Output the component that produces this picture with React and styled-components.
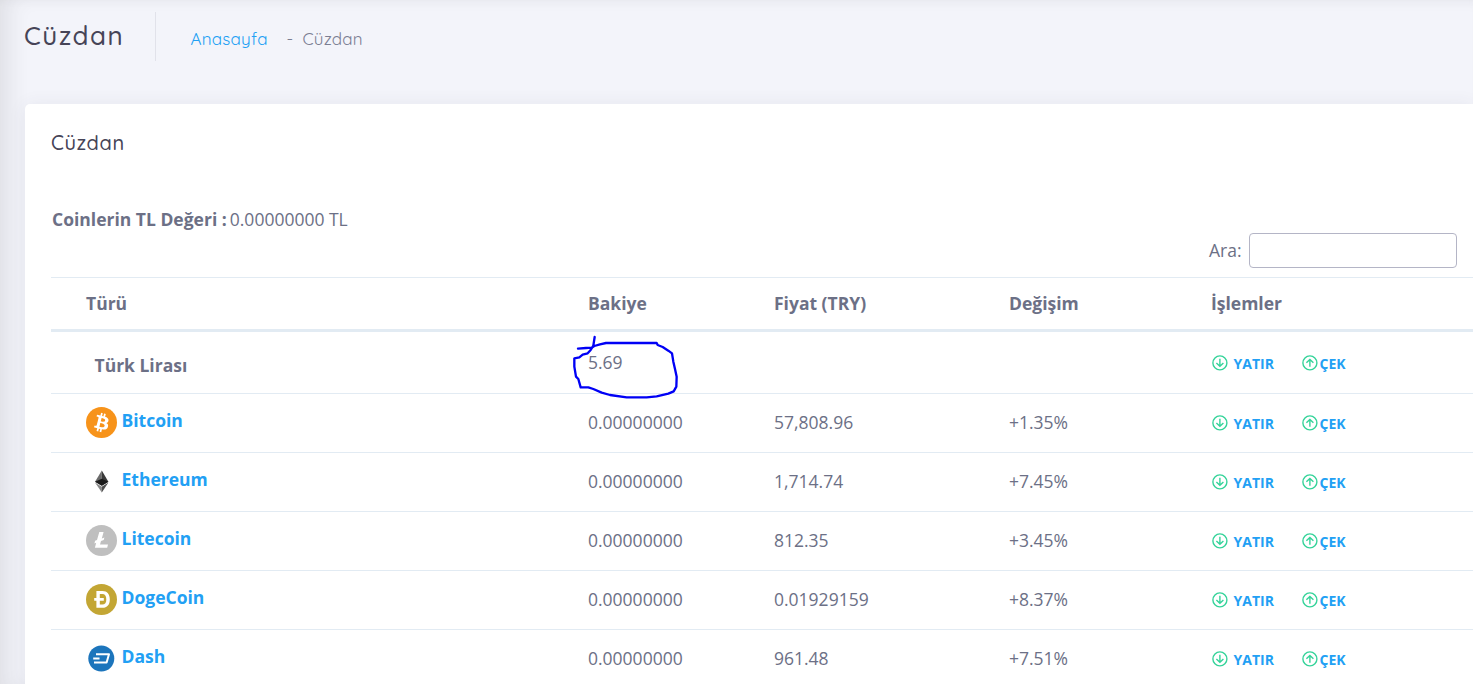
import React from 'react';
import styled, { createGlobalStyle } from 'styled-components';

const GlobalStyle = createGlobalStyle`
  * {
    box-sizing: border-box;
  }

  body {
    margin: 0;
    overflow: hidden;
    background-color: #f3f4fa;
    color: #6c7086;
    font-family: 'Open Sans', 'Noto Sans', sans-serif;
    font-size: 17.5px;
  }

  a {
    color: #22a0f4;
    text-decoration: none;
  }
`;

const Page = styled.div`
  height: 684px;
  overflow: hidden;
  box-shadow: inset 16px 0 22px -8px rgba(60, 60, 60, 0.11), inset 0 6px 10px -6px rgba(60, 60, 70, 0.05);
`;

const SubHeader = styled.header`
  display: flex;
  height: 104px;
  padding: 12px 0 0 24px;
  font-family: Quicksand, Lato, sans-serif;
`;

const PageTitle = styled.h1`
  width: 132px;
  height: 49px;
  margin: 0;
  border-right: 1px solid #e1e2ea;
  color: #464457;
  font-size: 26px;
  font-weight: 500;
  line-height: 48px;
  letter-spacing: 1.5px;
`;

const Breadcrumb = styled.nav`
  display: flex;
  height: 49px;
  padding-left: 34.5px;
  font-size: 17px;
  line-height: 54px;
  letter-spacing: 0.2px;
  color: #7b7e93;

  a {
    width: 96px;
  }

  span {
    width: 16px;
  }
`;

const Card = styled.main`
  height: 600px;
  margin-left: 25px;
  padding-left: 26px;
  background-color: white;
  border-radius: 5px 0 0 0;
  box-shadow: 0 1px 18px rgba(69, 65, 90, 0.08);
`;

const CardTitle = styled.h2`
  height: 78px;
  margin: 0;
  color: #464457;
  font-family: Quicksand, Lato, sans-serif;
  font-size: 20px;
  font-weight: 500;
  line-height: 78px;
  letter-spacing: 0.6px;
`;

const Total = styled.div`
  height: 51px;
  padding: 25px 0 0 1px;
  line-height: 24px;

  strong {
    margin-right: 3px;
    font-weight: 700;
  }
`;

const Search = styled.label`
  display: flex;
  justify-content: flex-end;
  align-items: center;
  gap: 7.5px;
  height: 35px;
  margin-right: 16px;
  line-height: 22px;

  span {
    padding-bottom: 2px;
  }
`;

const SearchInput = styled.input`
  width: 208px;
  height: 35px;
  border: 1px solid #b4b5c6;
  border-radius: 4px;
  background-color: white;
`;

const Table = styled.div`
  margin-top: 9px;
  border-top: 1px solid #e2ebf3;
`;

const Row = styled.div`
  display: grid;
  grid-template-columns: 502px 186px 235px 202px 1fr;
  align-items: center;
  height: ${({ $height }) => $height || 59}px;
  padding: 0 0 2px 35px;
  border-bottom: 1px solid #e2ebf3;
`;

const HeadRow = styled(Row)`
  height: 54px;
  border-bottom-width: 3px;
  font-weight: 700;
`;

const Balance = styled.span`
  position: relative;
`;

const Scribble = styled.svg`
  position: absolute;
  left: -28px;
  top: -25px;
`;

const Currency = styled.div`
  display: flex;
  align-items: center;
  gap: 4.5px;
  font-weight: 700;

  svg {
    flex: none;
  }

  a {
    padding-bottom: 4px;
  }
`;

const LiraName = styled.div`
  padding: 7px 0 0 8.5px;
  font-weight: 700;
`;

const Actions = styled.div`
  display: flex;
  font-size: 14px;
  font-weight: 700;
  padding-top: ${({ $offset }) => $offset || 0}px;
`;

const Action = styled.a`
  display: flex;
  align-items: center;
  gap: ${({ $gap }) => $gap}px;
  width: 90px;
  padding-left: 1px;

  svg {
    margin-top: 1px;
  }

  span {
    padding-top: 2px;
  }
`;

const ArrowIcon = ({ up }) => (
  <svg width="16" height="16" viewBox="0 0 16 16" fill="none" stroke="#34d399" strokeWidth="1.4">
    <circle cx="7.9" cy="7.9" r="7" />
    <path d={up ? 'M7.9 11.8V4.5M4.4 7.8l3.5-3.3 3.5 3.3' : 'M7.9 3.8v7.5M4.4 8l3.5 3.3L11.4 8'} />
  </svg>
);

const Bitcoin = () => (
  <svg width="31" height="31" viewBox="0 0 32 32">
    <circle cx="16" cy="16" r="16" fill="#f7931a" />
    <path
      fill="white"
      d="M23.2 14.02c.31-2.1-1.29-3.23-3.48-3.98l.71-2.85-1.73-.43-.69 2.77-1.39-.33.7-2.78-1.74-.44-.71 2.84-1.11-.26-2.39-.6-.46 1.85s1.28.3 1.26.31c.7.18.83.64.81 1.01l-.81 3.24-1.13 4.54c-.09.21-.3.54-.8.41.02.03-1.26-.31-1.26-.31l-.86 1.99 3.49.88-.72 2.87 1.73.43.71-2.84 1.38.36-.71 2.83 1.74.43.71-2.87c2.97.56 5.21.34 6.15-2.35.76-2.16-.04-3.41-1.6-4.22 1.14-.27 1.99-1.02 2.22-2.57zm-3.99 5.56c-.53 2.17-4.18 1-5.36.7l.95-3.82c1.19.3 4.98.88 4.41 3.12zm.54-5.6c-.49 1.97-3.53.97-4.51.72l.86-3.46c.99.24 4.17.71 3.65 2.74z"
    />
  </svg>
);

const Ethereum = () => (
  <svg width="31" height="31" viewBox="0 0 31 31">
    <path fill="#6b6b6b" d="M15.8 4.5 9 15.8l6.8 4z" />
    <path fill="#3a3a3a" d="M15.8 4.5v15.3l6.6-4z" />
    <path fill="#1b1b1b" d="m9 15.8 6.8-3.1 6.6 3.1-6.6 4z" />
    <path fill="#888" d="m9 16.6 6.8 10v-5.9z" />
    <path fill="#4d4d4d" d="M15.8 20.7v5.9l6.6-10z" />
  </svg>
);

const Litecoin = () => (
  <svg width="31" height="31" viewBox="0 0 31 31">
    <circle cx="15.5" cy="15.5" r="15.5" fill="#bfbfbf" />
    <path
      fill="white"
      d="M13.3 7h4.3l-1.8 6.5 2.6-1-.7 2.6-2.7 1-1 3.4h8l-.8 3.3H8.9l1.3-5.1-1.8.7.7-2.6 1.9-.7z"
    />
  </svg>
);

const Dogecoin = () => (
  <svg width="31" height="31" viewBox="0 0 31 31">
    <circle cx="15.5" cy="15.5" r="15.5" fill="#c3a634" />
    <path
      fill="white"
      fillRule="evenodd"
      d="M10.4 7h6.1c4.7 0 7.3 3.3 7.3 8.4s-2.6 8.4-7.3 8.4h-6.1v-7H8.2V14h2.2zm3.4 3.1V14h4v2.8h-4v3.8h2.5c2.8 0 4-1.8 4-5.2s-1.2-5.3-4-5.3z"
    />
  </svg>
);

const Dash = () => (
  <svg width="31" height="31" viewBox="0 0 31 31">
    <circle cx="15.3" cy="15.5" r="13" fill="#1c75bc" />
    <path
      fill="none"
      stroke="white"
      strokeWidth="2"
      strokeLinejoin="round"
      d="M10 11.2h13l-2.4 8.4H8M7.2 15.4h6.3"
    />
  </svg>
);

const coins = [
  { name: 'Bitcoin', icon: Bitcoin, price: '57,808.96', change: '+1.35%' },
  { name: 'Ethereum', icon: Ethereum, price: '1,714.74', change: '+7.45%' },
  { name: 'Litecoin', icon: Litecoin, price: '812.35', change: '+3.45%' },
  { name: 'DogeCoin', icon: Dogecoin, price: '0.01929159', change: '+8.37%' },
  { name: 'Dash', icon: Dash, price: '961.48', change: '+7.51%' },
];

const RowActions = ({ offset }) => (
  <Actions $offset={offset}>
    <Action href="#" $gap={5.5}>
      <ArrowIcon />
      <span>YATIR</span>
    </Action>
    <Action href="#" $gap={1.5}>
      <ArrowIcon up />
      <span>ÇEK</span>
    </Action>
  </Actions>
);

const App = () => {
  return (
    <Page>
      <GlobalStyle />
      <SubHeader>
        <PageTitle>Cüzdan</PageTitle>
        <Breadcrumb>
          <a href="#">Anasayfa</a>
          <span>-</span>
          Cüzdan
        </Breadcrumb>
      </SubHeader>
      <Card>
        <CardTitle>Cüzdan</CardTitle>
        <Total>
          <strong>Coinlerin TL Değeri :</strong>
          0.00000000 TL
        </Total>
        <Search>
          <span>Ara:</span>
          <SearchInput type="text" />
        </Search>
        <Table>
          <HeadRow>
            <span>Türü</span>
            <span>Bakiye</span>
            <span>Fiyat (TRY)</span>
            <span>Değişim</span>
            <span>İşlemler</span>
          </HeadRow>
          <Row $height={62}>
            <LiraName>Türk Lirası</LiraName>
            <Balance>
              5.69
              <Scribble width="140" height="85" viewBox="0 0 420 255" fill="none" stroke="#0000f5" strokeWidth="7" strokeLinecap="round" strokeLinejoin="round">
                <path d="M54 71 78 69 95 68 103 63 120 58 138 54H290L293 60 308 66 325 77 336 85 340 110 345 132 350 155 349 185 341 199 325 206 290 214 260 217H200L150 210 125 203 100 192 85 187H62L55 162 48 155 43 125V100L58 97 68 89 83 85 92 75 100 62 104 36" />
              </Scribble>
            </Balance>
            <span />
            <span />
            <RowActions offset={2} />
          </Row>
          {coins.map(({ name, icon: Icon, price, change }) => (
            <Row key={name}>
              <Currency>
                <Icon />
                <a href="#">{name}</a>
              </Currency>
              <span>0.00000000</span>
              <span>{price}</span>
              <span>{change}</span>
              <RowActions />
            </Row>
          ))}
        </Table>
      </Card>
    </Page>
  );
};

export default App;
